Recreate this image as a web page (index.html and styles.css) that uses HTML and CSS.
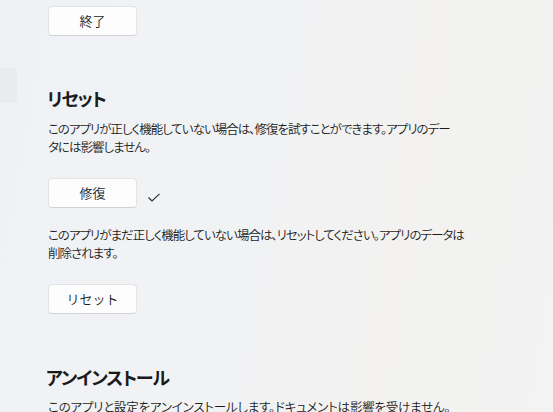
FILE: index.html
```html
<!DOCTYPE html>
<html lang="ja">
<head>
<meta charset="utf-8">
<link rel="stylesheet" href="styles.css">
</head>
<body>
<div class="page">
  <div class="sidebar">
    <div class="nav-item"></div>
  </div>
  <main class="content">
    <button class="btn btn-first">終了</button>

    <h2 class="heading heading-reset">リセット</h2>
    <p class="desc">このアプリが正しく機能していない場合は、修復を試すことができます。アプリのデー<br>タには影響しません。</p>
    <div class="action-row">
      <button class="btn">修復</button>
      <svg class="check" width="14" height="10" viewBox="0 0 14 10"><path d="M1.5 4.5 L5 8 L12.5 0.8" fill="none" stroke="#2b2b2b" stroke-width="1.1"/></svg>
    </div>

    <p class="desc desc-second">このアプリがまだ正しく機能していない場合は、リセットしてください。アプリのデータは<br>削除されます。</p>
    <div class="action-row">
      <button class="btn">リセット</button>
    </div>

    <h2 class="heading heading-uninstall">アンインストール</h2>
    <p class="desc desc-tight">このアプリと設定をアンインストールします。ドキュメントは影響を受けません。</p>
  </main>
</div>
</body>
</html>
```

FILE: styles.css
```css
html, body {
  margin: 0;
  padding: 0;
  height: 100%;
}
body {
  background: linear-gradient(100deg, #eff2f5 0%, #f1f2f4 45%, #f3f2f1 70%, #f2f3f2 100%);
  font-family: "Noto Sans CJK JP", "Noto Sans", sans-serif;
  color: #1b1b1b;
  overflow: hidden;
}
.page {
  display: flex;
  width: 553px;
  height: 412px;
  overflow: hidden;
}
.sidebar {
  width: 17px;
  flex: none;
}
.nav-item {
  margin-top: 68px;
  height: 35px;
  width: 17px;
  background: #e9ebee;
  border-radius: 0 4px 4px 0;
}
.content {
  margin-left: 31px;
  display: flex;
  flex-direction: column;
  align-items: flex-start;
}
.btn {
  width: 89px;
  height: 30px;
  box-sizing: border-box;
  background: #fdfdfd;
  border: 1px solid #e3e3e3;
  border-bottom-color: #d2d2d2;
  border-radius: 4px;
  font-family: "Noto Sans CJK JP", sans-serif;
  font-size: 13px;
  font-weight: 350;
  color: #1b1b1b;
  padding: 0;
  line-height: 28px;
}
.btn-first {
  margin-top: 6px;
}
.heading {
  margin: 48px 0 0 -1px;
  font-size: 18px;
  line-height: 28px;
  font-weight: 700;
  font-feature-settings: "palt";
  letter-spacing: -1.1px;
}
.heading-uninstall {
  margin-top: 49px;
  margin-left: -2px;
}
.desc {
  margin: 8px 0 0 0;
  font-size: 12.5px;
  font-weight: 350;
  line-height: 18px;
  width: 460px;
  white-space: nowrap;
  font-feature-settings: "palt";
  letter-spacing: -1px;
}
.desc-second {
  margin-top: 18px;
}
.desc-tight {
  margin-top: 7px;
  letter-spacing: -0.2px;
}
.action-row {
  margin-top: 22px;
  display: flex;
  align-items: flex-start;
}
.check {
  margin: 15px 0 0 10px;
}
```
